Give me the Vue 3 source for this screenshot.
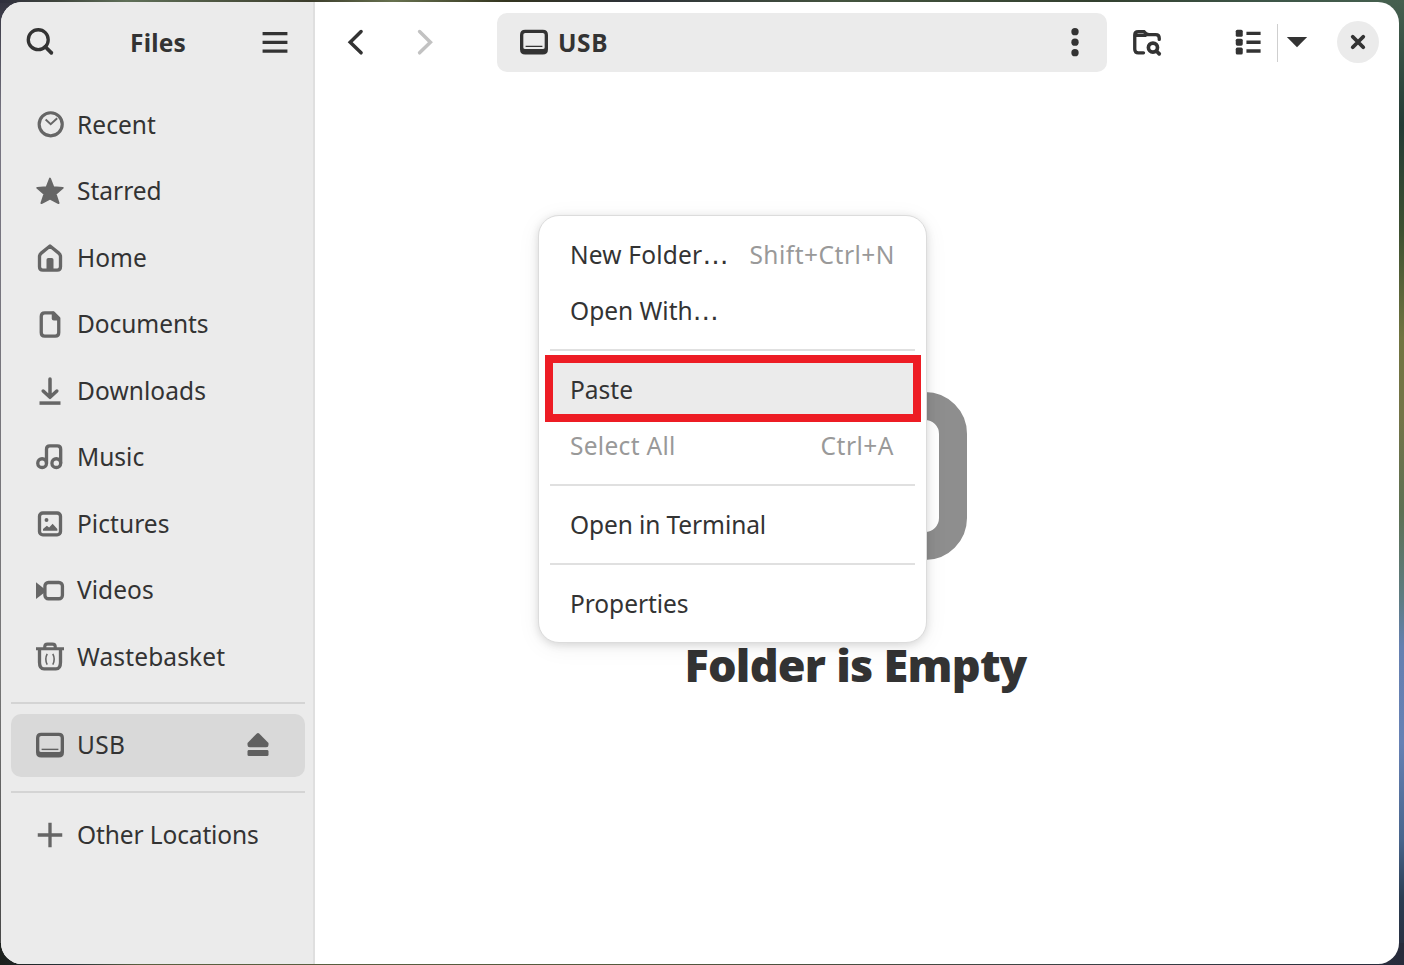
<script setup>
const places = [
  { name: 'Recent', icon: 'recent', ls: 0.05 },
  { name: 'Starred', icon: 'star', ls: 0 },
  { name: 'Home', icon: 'home', ls: 0 },
  { name: 'Documents', icon: 'doc', ls: -0.06 },
  { name: 'Downloads', icon: 'down', ls: 0.08 },
  { name: 'Music', icon: 'music', ls: 0 },
  { name: 'Pictures', icon: 'pic', ls: 0.05 },
  { name: 'Videos', icon: 'video', ls: 0.05 },
  { name: 'Wastebasket', icon: 'trash', ls: 0.14 },
]

const menu = [
  [
    { label: 'New Folder', more: true, key: 'Shift+Ctrl+N', ls: 0.2 },
    { label: 'Open With', more: true, ls: 0 },
  ],
  [
    { label: 'Paste', active: true, ls: 0 },
    { label: 'Select All', key: 'Ctrl+A', disabled: true, ls: 0.3 },
  ],
  [{ label: 'Open in Terminal', ls: -0.1 }],
  [{ label: 'Properties', ls: -0.05 }],
]
</script>

<template>
  <div class="desktop">
    <div class="window">
      <aside class="sidebar">
        <header class="side-head">
          <svg class="ic" viewBox="0 0 16 16"><circle cx="7" cy="6.7" r="5.7" fill="none" stroke="currentColor" stroke-width="1.9" /><path d="M11 10.700l3.500 3.500" stroke="currentColor" stroke-width="2.100" stroke-linecap="round" /></svg>
          <span class="title">Files</span>
          <svg class="ic" viewBox="0 0 16 16"><path d="M.9 3.200h14.200M.9 8.200h14.200M.9 13.200h14.200" stroke="currentColor" stroke-width="1.900" /></svg>
        </header>
        <nav class="places">
          <div v-for="p in places" :key="p.name" class="row">
            <svg class="ic dim" viewBox="0 0 16 16" fill="none" stroke="currentColor" stroke-width="1.900">
              <template v-if="p.icon === 'recent'"><circle cx="8.400" cy="7.600" r="6.600" stroke-width="1.800" /><path d="M5.500 4.900l2.900 2.600 3.700-3.400" stroke-width="1.100" /></template>
              <path v-else-if="p.icon === 'star'" d="M8 .9l1.900 4.900 5.400.4-4.100 3.500 1.700 5.200L8 12.300l-4.900 2.600 1.700-5.200L.7 6.200l5.400-.4z" fill="currentColor" stroke-width="1.100" stroke-linejoin="round" />
              <template v-else-if="p.icon === 'home'"><path d="M8 1.100L3 5.200Q2 6 2 7.200V13Q2 14.900 3.900 14.900H12.100Q14 14.900 14 13V7.200Q14 6 13 5.200Z" stroke-linejoin="round" /><path d="M6 15V9q0-1 1-1h2q1 0 1 1v6z" fill="currentColor" stroke="none" /></template>
              <template v-else-if="p.icon === 'doc'"><path d="M5 1.600H9.800L13 4.800V12.800Q13 14.900 11 14.900H5Q3 14.900 3 12.800V3.700Q3 1.600 5 1.600Z" /><path d="M9 1h1.500L13.600 4.200V6H10.200Q9 6 9 4.800z" fill="currentColor" stroke="none" /></template>
              <template v-else-if="p.icon === 'down'"><path d="M8 1.100V11.500M4.100 8L8 11.600L11.900 8" stroke-linecap="round" stroke-linejoin="round" stroke-width="2" /><path d="M2 14.900H14" stroke-width="2" /></template>
              <template v-else-if="p.icon === 'music'"><circle cx="3.500" cy="11.500" r="2.500" /><circle cx="11.600" cy="11.500" r="2.500" /><path d="M6 11.500V3.500Q6 1.600 7.900 1.600H12.200Q14.100 1.600 14.100 3.500V11.500" /></template>
              <template v-else-if="p.icon === 'pic'"><rect x="2" y="1.700" width="12" height="12.500" rx="1.900" /><circle cx="6" cy="5.700" r="1.100" fill="currentColor" stroke="none" /><path d="M4 11.800V10.800L6.200 9L7.500 10L9.500 7.800L12.200 10.800V11.800Z" fill="currentColor" stroke="none" /></template>
              <template v-else-if="p.icon === 'video'"><rect x="5.100" y="3.700" width="10" height="9.300" rx="2" /><path d="M0 3.600L4.700 7.300V9.500L0 13.200Z" fill="currentColor" stroke="none" /></template>
              <template v-else><path d="M0 3.300H16M5 3V2.200Q5 .6 6.600 .6H9.400Q11 .6 11 2.200V3" stroke-width="1.800" /><path d="M2 4V11Q2 14.800 4.600 14.800H11.400Q14 14.800 14 11V4" /><path d="M6.400 6.200Q4.800 9.200 6.400 12.400M9.600 6.200Q11.200 9.200 9.600 12.400" stroke-width=".9" /></template>
            </svg>
            <span :style="{ letterSpacing: p.ls + 'px' }">{{ p.name }}</span>
          </div>
        </nav>
        <hr class="rule" />
        <div class="row selected">
          <svg class="ic dim" viewBox="0 0 16 16"><path fill-rule="evenodd" d="M3 1H13Q16 1 16 4V12.200Q16 15.200 13 15.200H3Q0 15.200 0 12.200V4Q0 1 3 1ZM3 2.800Q1.900 2.800 1.900 3.900V11.100Q1.900 12 3 12H13Q14.100 12 14.100 11.100V3.900Q14.100 2.800 13 2.800Z" fill="currentColor" /><path d="M3.200 10.500H12.800" stroke="currentColor" stroke-width=".8" /></svg>
          <span class="drive">USB</span>
          <svg class="ic dim eject" viewBox="0 0 16 16" fill="currentColor"><path d="M2 8V6.800L7.200 1.500Q8 .700 8.800 1.500L14 6.800V8Q14 9.300 12.700 9.300H3.300Q2 9.300 2 8Z" /><rect x="2" y="10.900" width="12" height="3.400" rx=".8" /></svg>
        </div>
        <hr class="rule second" />
        <div class="row other">
          <svg class="ic dim" viewBox="0 0 16 16"><path d="M1 8H15M8 1V15" stroke="currentColor" stroke-width="1.900" /></svg>
          <span>Other Locations</span>
        </div>
      </aside>

      <main class="main">
        <header class="toolbar">
          <svg class="ic" viewBox="0 0 16 16"><path d="M10.900 2L4.700 8.100L10.900 14.200" fill="none" stroke="currentColor" stroke-width="2" stroke-linecap="round" /></svg>
          <svg class="ic fwd" viewBox="0 0 16 16"><path d="M4.900 2L11.100 8.100L4.900 14.200" fill="none" stroke="currentColor" stroke-width="2" stroke-linecap="round" /></svg>
          <div class="pathbar">
            <svg class="ic" viewBox="0 0 16 16"><path fill-rule="evenodd" d="M3 1H13Q16 1 16 4V12.200Q16 15.200 13 15.200H3Q0 15.200 0 12.200V4Q0 1 3 1ZM3 2.800Q1.900 2.800 1.900 3.900V11.100Q1.900 12 3 12H13Q14.100 12 14.100 11.100V3.900Q14.100 2.800 13 2.800Z" fill="currentColor" /><path d="M3.200 10.500H12.800" stroke="currentColor" stroke-width=".8" /></svg>
            <span class="crumb">USB</span>
            <svg class="ic dots" viewBox="0 0 16 16" fill="currentColor"><circle cx="8" cy="2.100" r="2.100" /><circle cx="8" cy="8.100" r="2.100" /><circle cx="8" cy="14.100" r="2.100" /></svg>
          </div>
          <svg class="ic find" viewBox="0 0 16 16" fill="none" stroke="currentColor" stroke-width="1.900" stroke-linecap="round"><path d="M6 14.200H3Q1 14.200 1 12.200V4Q1 2.100 3 2.100H6.300L8 3.800H13Q15 3.800 15 5.800V6.500M1.500 4.200H7L8.300 3.600" /><circle cx="11.400" cy="11.200" r="2.600" stroke-width="2.100" /><path d="M13.500 13.300L15 14.800" stroke-width="2.100" /></svg>
          <svg class="ic list" viewBox="0 0 16 16" fill="currentColor"><rect x="1" y="1" width="4" height="4" rx=".9" /><rect x="1" y="6.100" width="4" height="4" rx=".9" /><rect x="1" y="11.200" width="4" height="4" rx=".9" /><path d="M7.100 2.200H15.200V4H7.100ZM7.100 7.200H15.200V9.100H7.100ZM7.100 12.200H15.200V14.100H7.100Z" /></svg>
          <i class="vsep"></i>
          <svg class="ic caret" viewBox="0 0 16 16"><path d="M2.200 5.100H13.800L8 11Z" fill="currentColor" /></svg>
          <div class="close"><svg class="ic" viewBox="0 0 16 16"><path d="M5 5L11 11M11 5L5 11" stroke="currentColor" stroke-width="2.200" stroke-linecap="round" /></svg></div>
        </header>
        <section class="empty">
          <div class="folder"></div>
          <h1>Folder is Empty</h1>
        </section>
      </main>
    </div>

    <div class="menu">
      <div v-for="(group, i) in menu" :key="i" class="group">
        <div v-for="it in group" :key="it.label" class="item" :class="{ active: it.active }">
          <span :class="{ off: it.disabled }" :style="{ letterSpacing: it.ls + 'px' }">{{ it.label }}<span v-if="it.more" class="more">…</span></span>
          <span v-if="it.key" class="key">{{ it.key }}</span>
        </div>
      </div>
    </div>
  </div>
</template>

<style>
html, body { margin: 0; overflow: hidden; }
</style>

<style scoped>
*, *::before { box-sizing: border-box; }
.desktop {
  position: relative;
  width: 1404px;
  height: 965px;
  padding: 2px 5px 1px 1px;
  overflow: hidden;
  font-family: "Noto Sans", "Open Sans", sans-serif;
  font-size: 24.5px;
  line-height: 34px;
  color: #333;
  white-space: nowrap;
  background:
    linear-gradient(90deg, #2f2f3d 0, #3f453d 4%, #5f6f58 9%, #3c3d2c 22%, #67714f 28%, #34351f 36%, #2d3138 45%, #44543f 60%, #33402f 78%, #3d5547 90%, #46604f) top / 100% 3px no-repeat,
    linear-gradient(90deg, #1c201d 0, #28333a 5%, #5b6040 10%, #55593d 45%, #3a4046 80%, #272b3b) bottom / 100% 22px no-repeat,
    linear-gradient(180deg, #46604f 0, #243b35 13%, #3e5131 24%, #717440 35%, #747447 43%, #5d7053 53%, #5e7c82 62%, #6580b0 67%, #6681b4 77%, #48658c 87%, #2b3d52 93%, #272b3b) right / 30px 100% no-repeat,
    linear-gradient(180deg, #33333f, #777582 12%, #777 70%, #444);
}
.window {
  display: flex;
  width: 1398px;
  height: 962px;
  border-radius: 21px;
  overflow: hidden;
  background: #fff;
}
.ic { width: 28px; height: 28px; flex: none; display: block; overflow: visible; }

.sidebar { width: 314px; background: #ebebeb; border-right: 2px solid #dfdfdf; }
.side-head { display: flex; align-items: center; justify-content: space-between; height: 82px; padding: 0 24px 0 25px; }
.side-head .ic { margin-top: -1.5px; }
.title, .crumb { font-weight: 700; }
.title { letter-spacing: .2px; margin-left: 1px; }
.crumb { letter-spacing: .6px; }
.places { padding-top: 9px; }
.row { display: flex; align-items: center; height: 63px; margin: 0 8px 3.5px 10px; padding: 0 33.5px 0 24.5px; gap: 13.5px; border-radius: 10px; }
.dim { color: #666; }
.rule { border: 0; height: 2px; margin: 13.5px 8px 10px 10px; background: #d4d4d4; }
.rule.second { margin-top: 14px; }
.selected { background: #d9d9d9; margin-bottom: 0; }
.selected .dim { color: #606060; }
.drive { letter-spacing: .3px; }
.eject { margin-left: auto; }
.other { margin-top: 11px; letter-spacing: -.12px; }

.main { flex: 1; display: flex; flex-direction: column; }
.toolbar { display: flex; align-items: center; height: 81px; padding-left: 27px; }
.toolbar > .ic, .pathbar > .ic { margin-top: -1px; }
.toolbar > .fwd { margin-left: 41px; color: #c2c2c2; }
.pathbar { display: flex; align-items: center; width: 610px; height: 59px; margin-left: 58px; padding: 0 18px 0 22.5px; border-radius: 10px; background: #ebebeb; gap: 10.5px; }
.pathbar > .dots { margin-left: auto; }
.find { margin-left: 26px; }
.list { margin-left: 73px; }
.vsep { width: 1.5px; height: 38px; margin-left: 14.5px; background: #cfcfcf; }
.caret { margin-left: 5px; }
.close { display: grid; place-items: center; width: 42px; height: 42px; margin: -.5px 0 0 26px; border-radius: 50%; background: #ebebeb; }

.empty { display: flex; flex-direction: column; align-items: center; padding-top: 309px; }
.folder { width: 220px; height: 168px; border: 28px solid #8e8e8e; border-radius: 42px; }
h1 { margin: 74px 3px 0 0; font-size: 45px; line-height: 62px; font-weight: 900; letter-spacing: -.75px; }

.menu {
  position: absolute;
  left: 538px;
  top: 215px;
  width: 389px;
  height: 428px;
  padding: 11px;
  border: 1.5px solid #dcdcdc;
  border-radius: 21px;
  background: #fff;
  box-shadow: 0 2px 9px rgba(0, 0, 0, .13), 0 4px 24px rgba(0, 0, 0, .06);
}
.group + .group { margin-top: 10px; padding-top: 11px; border-top: 2px solid #e0e0e0; }
.item { position: relative; display: flex; align-items: center; justify-content: space-between; height: 56px; padding: 0 21px 0 20px; }
.item span { position: relative; }
.active::before { content: ""; position: absolute; left: -5px; top: -7px; width: 376px; height: 67px; border: 8px solid #ed1c24; background: #ebebeb; }
.more { font-family: "DejaVu Sans", sans-serif; font-size: 26px; line-height: 1; }
.key, .off { color: #999; }
.key { letter-spacing: .5px; margin-right: -1px; }
.off + .key { margin-right: 0; }
</style>
